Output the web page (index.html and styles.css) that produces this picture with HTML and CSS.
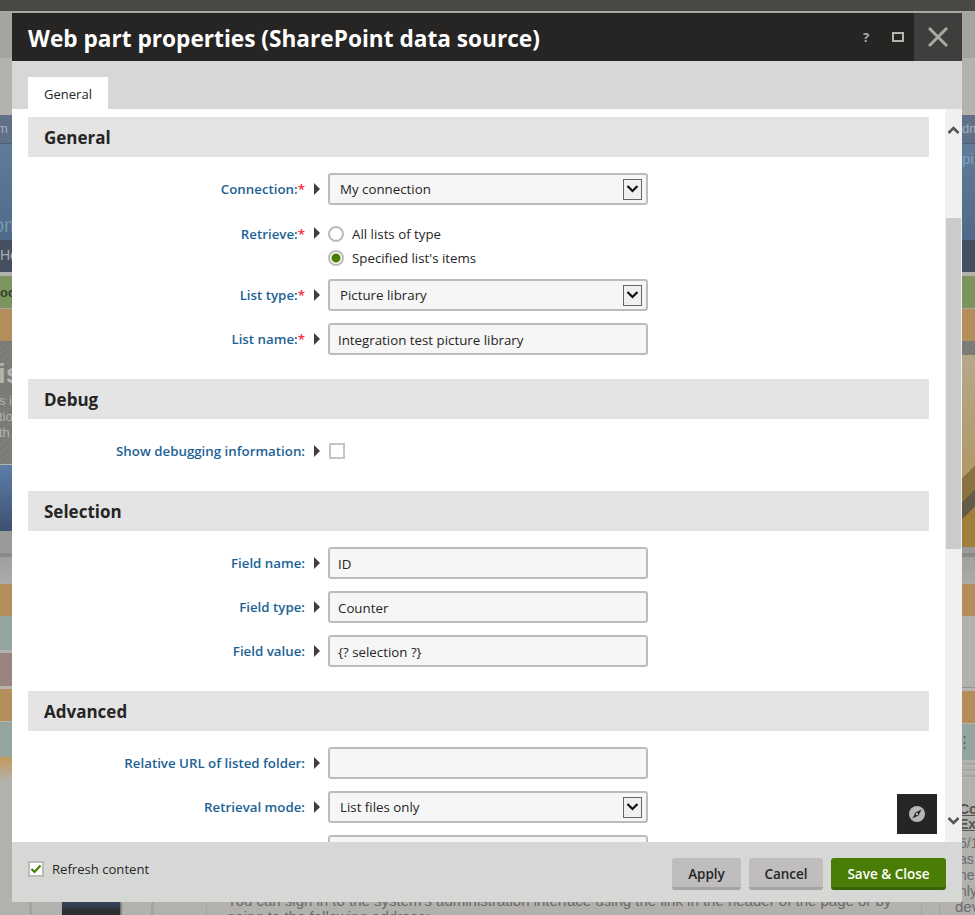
FILE: index.html
```html
<!DOCTYPE html>
<html lang="en">

<head>
    <meta charset="UTF-8">
    <title>Web part properties</title>
    <link rel="stylesheet" href="styles.css">
</head>

<body>
    <div class="backdrop">
        <div class="top-bar"></div>
        <div class="strips">
            <div class="strip-col">
                <div class="s-head1"></div>
                <div class="s-head2"></div>
                <div class="s-nav s-nav-left">m i</div>
                <div class="s-blue">
                    <span class="s-blue-text s-left-om">om</span>
                </div>
                <div class="s-dark">Ho</div>
                <div class="s-gap"></div>
                <div class="s-green">oo</div>
                <div class="s-tan"></div>
                <div class="s-hatch s-hatch-left">
                    <span class="s-hatch-big">is</span>
                    <span class="s-hatch-small">s i</span>
                    <span class="s-hatch-small">tio</span>
                    <span class="s-hatch-small">th</span>
                </div>
                <div class="s-deepblue"></div>
                <div class="s-grey"></div>
                <div class="s-tan2"></div>
                <div class="s-teal"></div>
                <div class="s-mauve"></div>
                <div class="s-tan3"></div>
                <div class="s-teal2"></div>
                <div class="s-orange"></div>
            </div>
            <div class="strip-mid"></div>
            <div class="strip-col">
                <div class="s-head1"></div>
                <div class="s-head2"></div>
                <div class="s-nav">dm</div>
                <div class="s-blue">
                    <span class="s-blue-text">pi</span>
                </div>
                <div class="s-dark"></div>
                <div class="s-gap"></div>
                <div class="s-green"></div>
                <div class="s-tan"></div>
                <div class="s-hatch s-hatch-right"></div>
                <div class="s-gold"></div>
                <div class="s-grey s-grey-right"></div>
                <div class="s-tan2"></div>
                <div class="s-plain"></div>
                <div class="s-tan3"></div>
                <div class="s-teal3">⋮</div>
                <div class="s-lines"></div>
                <div class="s-news">
                    <span class="s-news-title">Con<br>Exp</span>
                    <span class="s-news-text">6/1<br>as<br>he<br>nly</span>
                </div>
            </div>
        </div>
        <div class="bottom-strip">
            <div class="b-line b-line-1"></div>
            <div class="b-phone"></div>
            <div class="b-line b-line-2"></div>
            <div class="b-line b-line-3"></div>
            <p class="b-text">You can sign in to the system's administration interface using the link in the header of the page or by going to the following address:</p>
            <div class="b-line b-line-4"></div>
            <div class="b-line b-line-5"></div>
            <span class="b-dev">dev</span>
        </div>
    </div>

    <div class="dialog">
        <header class="dialog-head">
            <h1>Web part properties (SharePoint data source)</h1>
            <div class="head-help">?</div>
            <div class="head-max"></div>
            <div class="head-close">
                <svg width="20" height="20" viewBox="0 0 20 20">
                    <path d="M1 1L19 19M19 1L1 19" stroke="#a9a8a5" stroke-width="3" fill="none" />
                </svg>
            </div>
        </header>

        <div class="tabs">
            <div class="tab">General</div>
        </div>

        <div class="body">
            <main class="form">
                <section class="group">
                    <h2>General</h2>
                    <div class="rows">
                        <div class="row">
                            <label>Connection:<i>*</i></label>
                            <span class="arrow"></span>
                            <div class="select">My connection<span class="select-btn"><svg width="13" height="8" viewBox="0 0 13 8"><path d="M1.5 1L6.5 6L11.5 1" stroke="#111" stroke-width="2.2" fill="none" /></svg></span></div>
                        </div>
                        <div class="row row-radios">
                            <label>Retrieve:<i>*</i></label>
                            <span class="arrow"></span>
                            <div class="radios">
                                <div class="radio-item"><span class="radio"></span>All lists of type</div>
                                <div class="radio-item"><span class="radio radio-on"></span>Specified list's items</div>
                            </div>
                        </div>
                        <div class="row">
                            <label>List type:<i>*</i></label>
                            <span class="arrow"></span>
                            <div class="select">Picture library<span class="select-btn"><svg width="13" height="8" viewBox="0 0 13 8"><path d="M1.5 1L6.5 6L11.5 1" stroke="#111" stroke-width="2.2" fill="none" /></svg></span></div>
                        </div>
                        <div class="row">
                            <label>List name:<i>*</i></label>
                            <span class="arrow"></span>
                            <div class="input">Integration test picture library</div>
                        </div>
                    </div>
                </section>

                <section class="group">
                    <h2>Debug</h2>
                    <div class="rows">
                        <div class="row">
                            <label>Show debugging information:</label>
                            <span class="arrow"></span>
                            <span class="check"></span>
                        </div>
                    </div>
                </section>

                <section class="group">
                    <h2>Selection</h2>
                    <div class="rows">
                        <div class="row">
                            <label>Field name:</label>
                            <span class="arrow"></span>
                            <div class="input">ID</div>
                        </div>
                        <div class="row">
                            <label>Field type:</label>
                            <span class="arrow"></span>
                            <div class="input">Counter</div>
                        </div>
                        <div class="row">
                            <label>Field value:</label>
                            <span class="arrow"></span>
                            <div class="input">{? selection ?}</div>
                        </div>
                    </div>
                </section>

                <section class="group">
                    <h2>Advanced</h2>
                    <div class="rows">
                        <div class="row">
                            <label>Relative URL of listed folder:</label>
                            <span class="arrow"></span>
                            <div class="input"></div>
                        </div>
                        <div class="row">
                            <label>Retrieval mode:</label>
                            <span class="arrow"></span>
                            <div class="select">List files only<span class="select-btn"><svg width="13" height="8" viewBox="0 0 13 8"><path d="M1.5 1L6.5 6L11.5 1" stroke="#111" stroke-width="2.2" fill="none" /></svg></span></div>
                        </div>
                        <div class="row">
                            <label></label>
                            <span class="arrow-none"></span>
                            <div class="input"></div>
                        </div>
                    </div>
                </section>
            </main>

            <div class="scroll">
                <svg class="scroll-up" width="13" height="9" viewBox="0 0 13 9"><path d="M1.5 7L6.5 2L11.5 7" stroke="#555" stroke-width="2.6" fill="none" /></svg>
                <div class="scroll-thumb"></div>
                <svg class="scroll-down" width="13" height="9" viewBox="0 0 13 9"><path d="M1.5 2L6.5 7L11.5 2" stroke="#555" stroke-width="2.6" fill="none" /></svg>
            </div>

            <div class="compass">
                <svg width="18" height="18" viewBox="0 0 18 18">
                    <circle cx="9" cy="9" r="8" fill="#b4b6ba" />
                    <path d="M13.5 4.5L10.5 10.5L4.5 13.5L7.5 7.5Z" fill="#272523" />
                    <circle cx="9" cy="9" r="1.2" fill="#b4b6ba" />
                </svg>
            </div>
        </div>

        <footer class="dialog-foot">
            <div class="refresh">
                <span class="check check-on">
                    <svg width="12" height="10" viewBox="0 0 12 10"><path d="M1.5 5L4.5 8L10.5 1.5" stroke="#4a7d05" stroke-width="2.2" fill="none" /></svg>
                </span>
                Refresh content
            </div>
            <div class="foot-buttons">
                <button class="btn btn-apply">Apply</button>
                <button class="btn btn-cancel">Cancel</button>
                <button class="btn btn-save">Save &amp; Close</button>
            </div>
        </footer>
    </div>
</body>

</html>
```

FILE: styles.css
```css
* {
    box-sizing: border-box;
}

html,
body {
    margin: 0;
    height: 915px;
    overflow: hidden;
}

body {
    font-family: "Open Sans", "Noto Sans", sans-serif;
    font-size: 13.3px;
    color: #262524;
    background: #b2b1ae;
}

/* page behind the dialog */
.backdrop {
    height: 915px;
    display: flex;
    flex-direction: column;
    overflow: hidden;
}

.top-bar {
    height: 13px;
    flex: none;
    background: #4a4844;
    border-bottom: 2px solid #a9a8a2;
}

.strips {
    height: 889px;
    flex: none;
    display: flex;
}

.strip-mid {
    flex: 1;
}

.strip-col {
    width: 13px;
    flex: none;
    display: flex;
    flex-direction: column;
    overflow: hidden;
    font-family: "Liberation Sans", sans-serif;
    white-space: nowrap;
}

.strip-col:first-child {
    width: 12px;
}

.strip-col > div {
    width: 100%;
    flex: none;
}

.s-head1 {
    height: 45px;
    background: #a5a49e;
}

.s-head2 {
    height: 57px;
    background: #b3b2ae;
}

.s-nav {
    height: 29px;
    line-height: 27px;
    font-size: 13px;
    color: #a3aebb;
    background: #5f7088;
    border-bottom: 1px solid #4f6076;
}

.s-nav-left {
    text-indent: -3px;
}

.s-blue {
    height: 96px;
    background: linear-gradient(#617c98, #4f6a88);
    padding-top: 6px;
}

.s-blue-text {
    color: #7ea2b4;
    font-size: 15px;
}

.s-left-om {
    display: block;
    margin-top: 64px;
    font-size: 20px;
    margin-left: -7px;
    color: #7396aa;
}

.s-dark {
    height: 32px;
    line-height: 30px;
    font-size: 14px;
    color: #a8aeb4;
    background: #44505f;
}

.s-gap {
    height: 4px;
    background: #b2b1ae;
}

.s-green {
    height: 32px;
    line-height: 34px;
    font-size: 13px;
    font-weight: bold;
    color: #383f2c;
    background: #7c9560;
}

.s-tan {
    height: 33px;
    background: #b38e5b;
    border-top: 1px solid #a9a8a2;
}

.s-hatch {
    background: repeating-linear-gradient(135deg, #7a7a76 0, #7a7a76 4px, #858581 5px);
}

.s-hatch-left {
    height: 124px;
    display: flex;
    flex-direction: column;
    align-items: flex-start;
    border-bottom: 1px solid #b4b3b0;
    color: #b4b4b0;
    padding-top: 14px;
}

.s-hatch-big {
    font-size: 28px;
    font-weight: bold;
    line-height: 38px;
    margin-left: -2px;
}

.s-hatch-small {
    font-size: 13px;
    line-height: 16px;
    margin-left: -1px;
}

.s-hatch-right {
    height: 14px;
}

.s-deepblue {
    height: 66px;
    background: linear-gradient(#5b7ea8, #3f5070);
}

.s-gold {
    height: 192px;
    background:
        linear-gradient(135deg, transparent 60%, #8a7340 60%, #8a7340 72%, #655a46 72%, #655a46 80%, #a07f3a 80%),
        linear-gradient(#b5a88a, #ae8f52);
}

.s-grey {
    height: 53px;
    background: linear-gradient(#9a9a98 0, #9a9a98 22px, #8a8a88 22px, #8a8a88 26px, #a0a09e 26px, #ababa9 53px);
}

.s-grey-right {
    height: 37px;
    background: linear-gradient(#9a9a98 0, #9a9a98 6px, #8a8a88 6px, #8a8a88 10px, #a0a09e 10px, #ababa9 37px);
}

.s-tan2 {
    height: 32px;
    background: #b38e5b;
}

.s-teal {
    height: 34px;
    background: #94a5a0;
}

.s-mauve {
    height: 36px;
    background: #9a8480;
    border-top: 3px solid #b4b3b0;
}

.s-plain {
    height: 72px;
    background: #b2b1ae;
    border-bottom: 1px solid #949491;
}

.s-tan3 {
    height: 36px;
    background: #b38e5b;
    border-top: 3px solid #b4b3b0;
    border-bottom: 1px solid #b4b3b0;
}

.s-teal2 {
    height: 35px;
    background: #94a5a0;
}

.s-teal3 {
    height: 36px;
    background: #94a5a0;
    color: #55656a;
    font-size: 15px;
    line-height: 36px;
    text-indent: -5px;
}

.s-orange {
    height: 24px;
    background: linear-gradient(#c39a58, #b2b1ae);
}

.s-lines {
    height: 20px;
    background: repeating-linear-gradient(#b2b1ae 0, #b2b1ae 3px, #9c9b98 4px, #c4c3c0 6px);
}

.s-news {
    display: flex;
    flex-direction: column;
    gap: 3px;
    margin-left: -3px;
    padding-top: 22px;
    font-size: 14px;
    line-height: 16px;
    color: #6b6b6c;
}

.s-news-title {
    color: #57534c;
    font-weight: bold;
    text-decoration: underline;
    line-height: 15px;
}

.s-news-text {
    display: block;
}

.bottom-strip {
    flex: 1;
    display: flex;
    align-items: stretch;
    color: #6a696a;
    font-family: "Liberation Sans", sans-serif;
}

.b-line {
    width: 1px;
    flex: none;
    background: #a5a4a1;
}

.b-line-1 {
    width: 3px;
    margin-left: 29px;
}

.b-phone {
    width: 58px;
    flex: none;
    margin-left: 30px;
    background: linear-gradient(#36465f, #2e2e30 40%);
    box-shadow: 1px 0 2px #555;
}

.b-line-2 {
    width: 3px;
    margin-left: 31px;
}

.b-line-3 {
    margin-left: 52px;
}

.b-text {
    width: 690px;
    flex: none;
    margin: -9px 0 0 20px;
    font-size: 15px;
    line-height: 16px;
    height: 31px;
    overflow: hidden;
}

.b-line-4 {
    margin-left: 4px;
}

.b-line-5 {
    margin-left: 17px;
}

.b-dev {
    margin-left: 15px;
    margin-top: -3px;
    font-size: 15px;
    line-height: 15px;
}

/* dialog */
.dialog {
    position: absolute;
    left: 12px;
    top: 13px;
    width: 950px;
    height: 889px;
    display: flex;
    flex-direction: column;
    background: #d6d8d5;
}

.dialog-head {
    height: 48px;
    flex: none;
    display: flex;
    align-items: center;
    padding-left: 16px;
    background: #272523;
}

.dialog-head h1 {
    flex: 1;
    margin: 0;
    padding-top: 2px;
    font-size: 22.65px;
    font-weight: 700;
    color: #fff;
}

.head-help {
    width: 26px;
    color: #a9adb2;
    font-size: 13px;
    font-weight: 700;
    margin-right: 13px;
    margin-top: -1px;
    text-align: center;
}

.head-max {
    width: 12px;
    height: 10px;
    border: 2px solid #b4b3b0;
    margin-right: 9px;
}

.head-close {
    width: 48px;
    height: 48px;
    display: flex;
    align-items: center;
    justify-content: center;
    background: #403e3c;
    margin-left: 1px;
}

.tabs {
    height: 48px;
    flex: none;
    display: flex;
    align-items: flex-end;
    padding-left: 16px;
}

.tab {
    width: 80px;
    height: 32px;
    line-height: 34px;
    text-align: center;
    background: #fff;
    font-size: 13px;
}

.body {
    position: relative;
    flex: 1;
    min-height: 0;
    display: flex;
    background: #fff;
    overflow: hidden;
}

.form {
    flex: 1;
    min-width: 0;
    padding: 8px 16px 0;
}

.group {
    margin-bottom: 24px;
}

.group h2 {
    height: 40px;
    line-height: 42px;
    margin: 0;
    padding-left: 16px;
    font-size: 17px;
    font-weight: 700;
    color: #262524;
    background: #e4e4e4;
}

.rows {
    display: flex;
    flex-direction: column;
    gap: 12px;
    padding-top: 16px;
}

.row {
    min-height: 32px;
    display: flex;
    align-items: center;
}

.row label {
    width: 277px;
    flex: none;
    text-align: right;
    font-weight: 600;
    color: #1c6295;
    white-space: nowrap;
}

.row label i {
    color: #ff2030;
    font-style: normal;
}

.arrow {
    width: 0;
    height: 0;
    flex: none;
    margin: 0 8px 0 9px;
    border-left: 6px solid #403e3c;
    border-top: 6px solid transparent;
    border-bottom: 6px solid transparent;
}

.arrow-none {
    width: 23px;
    flex: none;
}

.input,
.select {
    width: 320px;
    height: 32px;
    flex: none;
    display: flex;
    align-items: center;
    padding-left: 8px;
    background: #f6f6f6;
    border: 2px solid #bcbcbc;
    border-radius: 3px;
}

.input {
    padding-top: 2px;
}

.select {
    padding-left: 10px;
    justify-content: space-between;
    padding-right: 4px;
}

.select-btn {
    width: 19px;
    height: 21px;
    display: flex;
    align-items: center;
    justify-content: center;
    background: #f0f0f0;
    border: 1px solid #666;
}

.row-radios {
    height: 50px;
    align-items: flex-start;
}

.row-radios label {
    margin-top: 8px;
}

.row-radios .arrow {
    margin-top: 10px;
}

.radios {
    padding-top: 5px;
}

.radio-item {
    height: 24px;
    display: flex;
    align-items: center;
    gap: 8px;
}

.radio {
    width: 16px;
    height: 16px;
    border: 2px solid #bcbcbc;
    border-radius: 50%;
    background: #fff;
}

.radio-on {
    background: radial-gradient(circle, #4a7d05 0, #4a7d05 4px, #fff 5px);
}

.check {
    width: 16px;
    height: 16px;
    flex: none;
    display: flex;
    align-items: center;
    justify-content: center;
    border: 2px solid #c4c4c4;
    background: #fff;
    margin-left: 1px;
}

.check-on {
    margin-left: 0;
    border-color: #bcbcbc;
}

/* scrollbar */
.scroll {
    width: 17px;
    flex: none;
    display: flex;
    flex-direction: column;
    align-items: center;
    background: #f0f0f0;
}

.scroll-up {
    margin-top: 17px;
}

.scroll-thumb {
    width: 15px;
    height: 331px;
    margin-top: 83px;
    background: #cbcbcb;
}

.scroll-down {
    margin-top: auto;
    margin-bottom: 17px;
}

.compass {
    position: absolute;
    right: 25px;
    bottom: 8px;
    width: 40px;
    height: 40px;
    display: flex;
    align-items: center;
    justify-content: center;
    background: #272523;
}

/* footer */
.dialog-foot {
    height: 60px;
    flex: none;
    display: flex;
    justify-content: space-between;
    padding: 16px 16px 0;
}

.refresh {
    height: 22px;
    display: flex;
    align-items: center;
    gap: 8px;
    font-size: 13.1px;
}

.foot-buttons {
    display: flex;
    gap: 8px;
}

.btn {
    height: 32px;
    padding: 3px 0 0;
    font-family: inherit;
    font-size: 13.5px;
    font-weight: 600;
    color: #262524;
    background: #bfbdbd;
    border: none;
    border-bottom: 3px solid #a5a3a3;
    border-radius: 3px;
}

.btn-apply {
    width: 69px;
}

.btn-cancel {
    width: 74px;
}

.btn-save {
    width: 115px;
    color: #fff;
    background: #4a7d05;
    border-bottom-color: #396200;
}
```
